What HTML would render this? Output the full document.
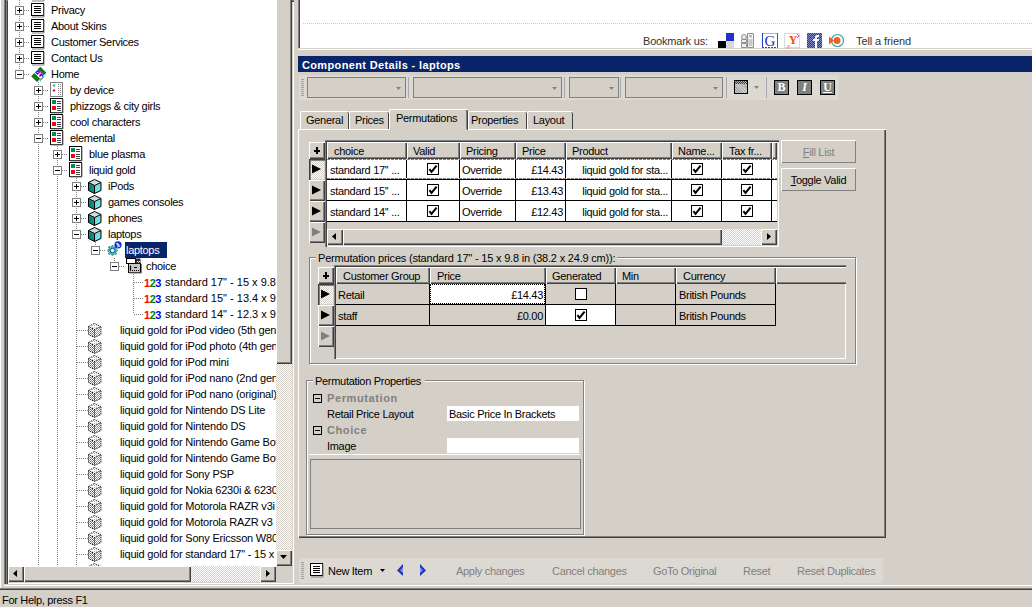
<!DOCTYPE html><html><head><meta charset="utf-8"><style>
html,body{margin:0;padding:0}
body{width:1032px;height:607px;overflow:hidden;background:#d4d0c8;position:relative;font-family:"Liberation Sans",sans-serif;font-size:11px;color:#000}
div{position:absolute;box-sizing:border-box}
.t{white-space:nowrap;line-height:16px;height:16px;letter-spacing:-0.3px}
svg{position:absolute;overflow:visible}
.dv{background:repeating-linear-gradient(to bottom,#808080 0 1px,transparent 1px 2px)}
.dh{background:repeating-linear-gradient(to right,#808080 0 1px,transparent 1px 2px)}
.chk{background:#fff;border:1px solid #000;width:12px;height:12px}
</style></head><body>
<svg width="0" height="0" style="position:absolute;left:0;top:0"><defs><pattern id="dc" width="2" height="2" patternUnits="userSpaceOnUse"><rect width="2" height="2" fill="#fff"/><rect width="1" height="1" fill="#20c8c8"/><rect x="1" y="1" width="1" height="1" fill="#20c8c8"/></pattern><pattern id="dg" width="2" height="2" patternUnits="userSpaceOnUse"><rect width="2" height="2" fill="#fff"/><rect width="1" height="1" fill="#109040"/><rect x="1" y="1" width="1" height="1" fill="#20c8c8"/></pattern><pattern id="dw" width="2" height="2" patternUnits="userSpaceOnUse"><rect width="2" height="2" fill="#fff"/><rect width="1" height="1" fill="#c0c0c0"/></pattern></defs></svg>
<div style="left:0px;top:0px;width:1px;height:589px;background:#ffffff"></div>
<div style="left:0px;top:589px;width:1032px;height:1px;background:#404040"></div>
<div style="left:0px;top:588px;width:1032px;height:1px;background:#808080"></div>
<div class="t" style="left:2px;top:592px;">For Help, press F1</div>
<div style="left:4px;top:-2px;width:290px;height:586px;background:#fff;box-shadow:inset 1px 1px 0 #808080, inset 2px 2px 0 #404040, inset 3px 3px 0 #808080, inset 4px 4px 0 #404040, inset -1px -1px 0 #ffffff, inset -2px -2px 0 #d4d0c8;"></div>
<div style="left:8px;top:0;width:268px;height:566px;overflow:hidden;background:#fff">
<div class="dv" style="left:11px;top:0px;width:1px;height:74px"></div>
<div class="dv" style="left:30px;top:82px;width:1px;height:484px"></div>
<div class="dv" style="left:49px;top:146px;width:1px;height:420px"></div>
<div class="dv" style="left:68px;top:178px;width:1px;height:388px"></div>
<div class="dv" style="left:87px;top:242px;width:1px;height:8px"></div>
<div class="dv" style="left:106px;top:258px;width:1px;height:8px"></div>
<div class="dv" style="left:125px;top:274px;width:1px;height:40px"></div>
<div class="dh" style="left:16px;top:10px;width:6px;height:1px"></div>
<div style="left:7px;top:6px;width:9px;height:9px;border:1px solid #808080;background:#fff"></div>
<div style="left:9px;top:10px;width:5px;height:1px;background:#000"></div>
<div style="left:11px;top:8px;width:1px;height:5px;background:#000"></div>
<svg style="left:23px;top:3px" width="14" height="14"><rect x="0.5" y="0.5" width="12" height="12" fill="#fff" stroke="#000"/><path d="M13 1v13H1" stroke="#808080" fill="none"/><path d="M3 3.5h7M3 5.5h7M3 7.5h7M3 9.5h7" stroke="#000" fill="none"/></svg>
<div class="t" style="left:43px;top:2px;">Privacy</div>
<div class="dh" style="left:16px;top:26px;width:6px;height:1px"></div>
<div style="left:7px;top:22px;width:9px;height:9px;border:1px solid #808080;background:#fff"></div>
<div style="left:9px;top:26px;width:5px;height:1px;background:#000"></div>
<div style="left:11px;top:24px;width:1px;height:5px;background:#000"></div>
<svg style="left:23px;top:19px" width="14" height="14"><rect x="0.5" y="0.5" width="12" height="12" fill="#fff" stroke="#000"/><path d="M13 1v13H1" stroke="#808080" fill="none"/><path d="M3 3.5h7M3 5.5h7M3 7.5h7M3 9.5h7" stroke="#000" fill="none"/></svg>
<div class="t" style="left:43px;top:18px;">About Skins</div>
<div class="dh" style="left:16px;top:42px;width:6px;height:1px"></div>
<div style="left:7px;top:38px;width:9px;height:9px;border:1px solid #808080;background:#fff"></div>
<div style="left:9px;top:42px;width:5px;height:1px;background:#000"></div>
<div style="left:11px;top:40px;width:1px;height:5px;background:#000"></div>
<svg style="left:23px;top:35px" width="14" height="14"><rect x="0.5" y="0.5" width="12" height="12" fill="#fff" stroke="#000"/><path d="M13 1v13H1" stroke="#808080" fill="none"/><path d="M3 3.5h7M3 5.5h7M3 7.5h7M3 9.5h7" stroke="#000" fill="none"/></svg>
<div class="t" style="left:43px;top:34px;">Customer Services</div>
<div class="dh" style="left:16px;top:58px;width:6px;height:1px"></div>
<div style="left:7px;top:54px;width:9px;height:9px;border:1px solid #808080;background:#fff"></div>
<div style="left:9px;top:58px;width:5px;height:1px;background:#000"></div>
<div style="left:11px;top:56px;width:1px;height:5px;background:#000"></div>
<svg style="left:23px;top:51px" width="14" height="14"><rect x="0.5" y="0.5" width="12" height="12" fill="#fff" stroke="#000"/><path d="M13 1v13H1" stroke="#808080" fill="none"/><path d="M3 3.5h7M3 5.5h7M3 7.5h7M3 9.5h7" stroke="#000" fill="none"/></svg>
<div class="t" style="left:43px;top:50px;">Contact Us</div>
<div class="dh" style="left:16px;top:74px;width:6px;height:1px"></div>
<div style="left:7px;top:70px;width:9px;height:9px;border:1px solid #808080;background:#fff"></div>
<div style="left:9px;top:74px;width:5px;height:1px;background:#000"></div>
<svg style="left:23px;top:67px" width="16" height="16"><path d="M5 4.5 L11.5 11" stroke="#fff" stroke-width="5.5"/><path d="M8 1 L14 7" stroke="#008000" stroke-width="3.8"/><path d="M1.8 7.6 L7.6 13.4" stroke="#008000" stroke-width="4.4"/><path d="M1.5 9.8l4.5 4.5M3 8.5l5 5" stroke="#707070" stroke-dasharray="1 1" stroke-width="0.8" fill="none"/><path d="M8.5 12.5 L12.5 8.5 L13.5 10 L9.5 14 Z" fill="#909090"/><path d="M5 5.5 L7 3.5 L8.5 5 L6.5 7 Z" fill="none" stroke="#0000ff" stroke-width="1.2"/><path d="M7.5 6 L9.5 4.5 L11 6 L8.5 8.5" fill="none" stroke="#ff00ff" stroke-width="1.3"/><path d="M8.5 9.5 L10.5 7.5 L12 9" fill="none" stroke="#0000ff" stroke-width="1.2"/><path d="M14 7v1.5M9.5 13.5v1" stroke="#00e0e0"/></svg>
<div class="t" style="left:43px;top:66px;">Home</div>
<div class="dh" style="left:35px;top:90px;width:6px;height:1px"></div>
<div style="left:26px;top:86px;width:9px;height:9px;border:1px solid #808080;background:#fff"></div>
<div style="left:28px;top:90px;width:5px;height:1px;background:#000"></div>
<div style="left:30px;top:88px;width:1px;height:5px;background:#000"></div>
<svg style="left:42px;top:82px" width="14" height="15"><rect x="0.5" y="0.5" width="12" height="14" fill="#fff" stroke="#000" stroke-dasharray="1 1"/><path d="M4 2l1.5 1.5L4 5 2.5 3.5z" fill="#00c0c0"/><path d="M4 7l1.5 1.5L4 10 2.5 8.5z" fill="#ff0000"/><path d="M8.5 2v11M10.5 2v11" stroke="#808080" stroke-dasharray="1 1" fill="none"/></svg>
<div class="t" style="left:62px;top:82px;">by device</div>
<div class="dh" style="left:35px;top:106px;width:6px;height:1px"></div>
<div style="left:26px;top:102px;width:9px;height:9px;border:1px solid #808080;background:#fff"></div>
<div style="left:28px;top:106px;width:5px;height:1px;background:#000"></div>
<div style="left:30px;top:104px;width:1px;height:5px;background:#000"></div>
<svg style="left:42px;top:98px" width="14" height="15"><rect x="0.5" y="0.5" width="12" height="14" fill="#fff" stroke="#000"/><path d="M13 1v14H1" stroke="#808080" fill="none"/><rect x="2" y="2" width="4" height="4" fill="#008080"/><rect x="2" y="2" width="2" height="2" fill="#00a000"/><rect x="2" y="8" width="4" height="4" fill="#ff0000"/><path d="M7 3.5h4M7 5.5h4M7 8.5h4M7 10.5h4M7 12.5h4" stroke="#404040" fill="none"/></svg>
<div class="t" style="left:62px;top:98px;">phizzogs &amp; city girls</div>
<div class="dh" style="left:35px;top:122px;width:6px;height:1px"></div>
<div style="left:26px;top:118px;width:9px;height:9px;border:1px solid #808080;background:#fff"></div>
<div style="left:28px;top:122px;width:5px;height:1px;background:#000"></div>
<div style="left:30px;top:120px;width:1px;height:5px;background:#000"></div>
<svg style="left:42px;top:114px" width="14" height="15"><rect x="0.5" y="0.5" width="12" height="14" fill="#fff" stroke="#000"/><path d="M13 1v14H1" stroke="#808080" fill="none"/><rect x="2" y="2" width="4" height="4" fill="#008080"/><rect x="2" y="2" width="2" height="2" fill="#00a000"/><rect x="2" y="8" width="4" height="4" fill="#ff0000"/><path d="M7 3.5h4M7 5.5h4M7 8.5h4M7 10.5h4M7 12.5h4" stroke="#404040" fill="none"/></svg>
<div class="t" style="left:62px;top:114px;">cool characters</div>
<div class="dh" style="left:35px;top:138px;width:6px;height:1px"></div>
<div style="left:26px;top:134px;width:9px;height:9px;border:1px solid #808080;background:#fff"></div>
<div style="left:28px;top:138px;width:5px;height:1px;background:#000"></div>
<svg style="left:42px;top:130px" width="14" height="15"><rect x="0.5" y="0.5" width="12" height="14" fill="#fff" stroke="#000"/><path d="M13 1v14H1" stroke="#808080" fill="none"/><rect x="2" y="2" width="4" height="4" fill="#008080"/><rect x="2" y="2" width="2" height="2" fill="#00a000"/><rect x="2" y="8" width="4" height="4" fill="#ff0000"/><path d="M7 3.5h4M7 5.5h4M7 8.5h4M7 10.5h4M7 12.5h4" stroke="#404040" fill="none"/></svg>
<div class="t" style="left:62px;top:130px;">elemental</div>
<div class="dh" style="left:54px;top:154px;width:6px;height:1px"></div>
<div style="left:45px;top:150px;width:9px;height:9px;border:1px solid #808080;background:#fff"></div>
<div style="left:47px;top:154px;width:5px;height:1px;background:#000"></div>
<div style="left:49px;top:152px;width:1px;height:5px;background:#000"></div>
<svg style="left:61px;top:146px" width="14" height="15"><rect x="0.5" y="0.5" width="12" height="14" fill="#fff" stroke="#000"/><path d="M13 1v14H1" stroke="#808080" fill="none"/><rect x="2" y="2" width="4" height="4" fill="#008080"/><rect x="2" y="2" width="2" height="2" fill="#00a000"/><rect x="2" y="8" width="4" height="4" fill="#ff0000"/><path d="M7 3.5h4M7 5.5h4M7 8.5h4M7 10.5h4M7 12.5h4" stroke="#404040" fill="none"/></svg>
<div class="t" style="left:81px;top:146px;">blue plasma</div>
<div class="dh" style="left:54px;top:170px;width:6px;height:1px"></div>
<div style="left:45px;top:166px;width:9px;height:9px;border:1px solid #808080;background:#fff"></div>
<div style="left:47px;top:170px;width:5px;height:1px;background:#000"></div>
<svg style="left:61px;top:162px" width="14" height="15"><rect x="0.5" y="0.5" width="12" height="14" fill="#fff" stroke="#000"/><path d="M13 1v14H1" stroke="#808080" fill="none"/><rect x="2" y="2" width="4" height="4" fill="#008080"/><rect x="2" y="2" width="2" height="2" fill="#00a000"/><rect x="2" y="8" width="4" height="4" fill="#ff0000"/><path d="M7 3.5h4M7 5.5h4M7 8.5h4M7 10.5h4M7 12.5h4" stroke="#404040" fill="none"/></svg>
<div class="t" style="left:81px;top:162px;">liquid gold</div>
<div class="dh" style="left:73px;top:186px;width:6px;height:1px"></div>
<div style="left:64px;top:182px;width:9px;height:9px;border:1px solid #808080;background:#fff"></div>
<div style="left:66px;top:186px;width:5px;height:1px;background:#000"></div>
<div style="left:68px;top:184px;width:1px;height:5px;background:#000"></div>
<svg style="left:80px;top:179px" width="15" height="16"><path d="M0.5 3.5 L6.5 0.5 L13 3.5 L6.5 6.5 Z" fill="#d8d8d8"/><path d="M0.5 3.5 L6.5 6.5 V14.5 L0.5 11.5Z" fill="#109090"/><path d="M1.5 6l2 1v5l-2-1z" fill="#108040"/><path d="M6.5 6.5 L13 3.5 V11.5 L6.5 14.5Z" fill="#70dcdc"/><path d="M6.5 0.5 L13 3.5 V11.5 L6.5 14.5 L0.5 11.5 V3.5 Z M0.5 3.5 L6.5 6.5 L13 3.5 M6.5 6.5 V14.5" fill="none" stroke="#000"/></svg>
<div class="t" style="left:100px;top:178px;">iPods</div>
<div class="dh" style="left:73px;top:202px;width:6px;height:1px"></div>
<div style="left:64px;top:198px;width:9px;height:9px;border:1px solid #808080;background:#fff"></div>
<div style="left:66px;top:202px;width:5px;height:1px;background:#000"></div>
<div style="left:68px;top:200px;width:1px;height:5px;background:#000"></div>
<svg style="left:80px;top:195px" width="15" height="16"><path d="M0.5 3.5 L6.5 0.5 L13 3.5 L6.5 6.5 Z" fill="#d8d8d8"/><path d="M0.5 3.5 L6.5 6.5 V14.5 L0.5 11.5Z" fill="#109090"/><path d="M1.5 6l2 1v5l-2-1z" fill="#108040"/><path d="M6.5 6.5 L13 3.5 V11.5 L6.5 14.5Z" fill="#70dcdc"/><path d="M6.5 0.5 L13 3.5 V11.5 L6.5 14.5 L0.5 11.5 V3.5 Z M0.5 3.5 L6.5 6.5 L13 3.5 M6.5 6.5 V14.5" fill="none" stroke="#000"/></svg>
<div class="t" style="left:100px;top:194px;">games consoles</div>
<div class="dh" style="left:73px;top:218px;width:6px;height:1px"></div>
<div style="left:64px;top:214px;width:9px;height:9px;border:1px solid #808080;background:#fff"></div>
<div style="left:66px;top:218px;width:5px;height:1px;background:#000"></div>
<div style="left:68px;top:216px;width:1px;height:5px;background:#000"></div>
<svg style="left:80px;top:211px" width="15" height="16"><path d="M0.5 3.5 L6.5 0.5 L13 3.5 L6.5 6.5 Z" fill="#d8d8d8"/><path d="M0.5 3.5 L6.5 6.5 V14.5 L0.5 11.5Z" fill="#109090"/><path d="M1.5 6l2 1v5l-2-1z" fill="#108040"/><path d="M6.5 6.5 L13 3.5 V11.5 L6.5 14.5Z" fill="#70dcdc"/><path d="M6.5 0.5 L13 3.5 V11.5 L6.5 14.5 L0.5 11.5 V3.5 Z M0.5 3.5 L6.5 6.5 L13 3.5 M6.5 6.5 V14.5" fill="none" stroke="#000"/></svg>
<div class="t" style="left:100px;top:210px;">phones</div>
<div class="dh" style="left:73px;top:234px;width:6px;height:1px"></div>
<div style="left:64px;top:230px;width:9px;height:9px;border:1px solid #808080;background:#fff"></div>
<div style="left:66px;top:234px;width:5px;height:1px;background:#000"></div>
<svg style="left:80px;top:227px" width="15" height="16"><path d="M0.5 3.5 L6.5 0.5 L13 3.5 L6.5 6.5 Z" fill="#d8d8d8"/><path d="M0.5 3.5 L6.5 6.5 V14.5 L0.5 11.5Z" fill="#109090"/><path d="M1.5 6l2 1v5l-2-1z" fill="#108040"/><path d="M6.5 6.5 L13 3.5 V11.5 L6.5 14.5Z" fill="#70dcdc"/><path d="M6.5 0.5 L13 3.5 V11.5 L6.5 14.5 L0.5 11.5 V3.5 Z M0.5 3.5 L6.5 6.5 L13 3.5 M6.5 6.5 V14.5" fill="none" stroke="#000"/></svg>
<div class="t" style="left:100px;top:226px;">laptops</div>
<div class="dh" style="left:92px;top:250px;width:6px;height:1px"></div>
<div style="left:83px;top:246px;width:9px;height:9px;border:1px solid #808080;background:#fff"></div>
<div style="left:85px;top:250px;width:5px;height:1px;background:#000"></div>
<svg style="left:97px;top:241px" width="18" height="18"><path d="M7.5 4 L9 6 L11.5 5.5 L11 8 L13 9.5 L11 11 L11.5 13.5 L9 13 L7.5 15 L6 13 L3.5 13.5 L4 11 L2 9.5 L4 8 L3.5 5.5 L6 6 Z" fill="#30c0c0" stroke="#208040" stroke-dasharray="1 1"/><circle cx="7.5" cy="9.5" r="2.2" fill="#fff" stroke="#2040a0"/><circle cx="13" cy="3.8" r="3.6" fill="#1030e0"/><path d="M11 3c1.5-1 2.5 0 2 1s1 2 2 1M13 2c-1 1.5 0 2.5 1 2s-1 2.5-2 2" stroke="#fff" stroke-width="0.9" fill="none"/></svg>
<div style="left:117px;top:242px;width:42px;height:16px;background:#0a246a"></div>
<div class="t" style="left:118px;top:242px;color:#fff">laptops</div>
<div class="dh" style="left:111px;top:266px;width:6px;height:1px"></div>
<div style="left:102px;top:262px;width:9px;height:9px;border:1px solid #808080;background:#fff"></div>
<div style="left:104px;top:266px;width:5px;height:1px;background:#000"></div>
<svg style="left:118px;top:258px" width="16" height="16"><rect x="2.5" y="5.5" width="12" height="9" fill="#c8c8c8" stroke="#000"/><rect x="0.5" y="0.5" width="9" height="5" fill="#fff" stroke="#000"/><rect x="9.5" y="0.5" width="5" height="5" fill="#303030"/><path d="M11 3l1.5 1.5L14 3" stroke="#fff" fill="none"/><path d="M4.5 8v4M4 8h1M8 9.5h3" stroke="#000" stroke-width="1.2" fill="none"/><path d="M4 12.5h9" stroke="#000" stroke-dasharray="1 1" fill="none"/><path d="M15.5 6v9H3" stroke="#808080" fill="none"/></svg>
<div class="t" style="left:138px;top:258px;">choice</div>
<div class="dh" style="left:126px;top:282px;width:10px;height:1px"></div>
<div style="left:136px;top:278px;font:bold 11px 'Liberation Sans',sans-serif;line-height:10px;letter-spacing:-0.5px;white-space:nowrap"><span style="color:#ff0000">1</span><span style="color:#008000">2</span><span style="color:#0000ff">3</span></div>
<div class="t" style="left:157px;top:274px;letter-spacing:0">standard 17" - 15 x 9.8 in (38.2 x 24.9 cm)</div>
<div class="dh" style="left:126px;top:298px;width:10px;height:1px"></div>
<div style="left:136px;top:294px;font:bold 11px 'Liberation Sans',sans-serif;line-height:10px;letter-spacing:-0.5px;white-space:nowrap"><span style="color:#ff0000">1</span><span style="color:#008000">2</span><span style="color:#0000ff">3</span></div>
<div class="t" style="left:157px;top:290px;letter-spacing:0">standard 15" - 13.4 x 9.1 in</div>
<div class="dh" style="left:126px;top:314px;width:10px;height:1px"></div>
<div style="left:136px;top:310px;font:bold 11px 'Liberation Sans',sans-serif;line-height:10px;letter-spacing:-0.5px;white-space:nowrap"><span style="color:#ff0000">1</span><span style="color:#008000">2</span><span style="color:#0000ff">3</span></div>
<div class="t" style="left:157px;top:306px;letter-spacing:0">standard 14" - 12.3 x 9 in</div>
<div class="dh" style="left:69px;top:330px;width:11px;height:1px"></div>
<svg style="left:80px;top:323px" width="15" height="16"><path d="M0.5 3.5 L6.5 0.5 L13 3.5 L6.5 6.5 Z" fill="url(#dw)"/><path d="M0.5 3.5 L6.5 6.5 V14.5 L0.5 11.5Z" fill="url(#dg)"/><path d="M6.5 6.5 L13 3.5 V11.5 L6.5 14.5Z" fill="url(#dc)"/><path d="M6.5 0.5 L13 3.5 V11.5 L6.5 14.5 L0.5 11.5 V3.5 Z M0.5 3.5 L6.5 6.5 L13 3.5 M6.5 6.5 V14.5" fill="none" stroke="#000" stroke-dasharray="1 1"/></svg>
<div class="t" style="left:112px;top:322px;letter-spacing:-0.2px">liquid gold for iPod video (5th gen)</div>
<div class="dh" style="left:69px;top:346px;width:11px;height:1px"></div>
<svg style="left:80px;top:339px" width="15" height="16"><path d="M0.5 3.5 L6.5 0.5 L13 3.5 L6.5 6.5 Z" fill="url(#dw)"/><path d="M0.5 3.5 L6.5 6.5 V14.5 L0.5 11.5Z" fill="url(#dg)"/><path d="M6.5 6.5 L13 3.5 V11.5 L6.5 14.5Z" fill="url(#dc)"/><path d="M6.5 0.5 L13 3.5 V11.5 L6.5 14.5 L0.5 11.5 V3.5 Z M0.5 3.5 L6.5 6.5 L13 3.5 M6.5 6.5 V14.5" fill="none" stroke="#000" stroke-dasharray="1 1"/></svg>
<div class="t" style="left:112px;top:338px;letter-spacing:-0.2px">liquid gold for iPod photo (4th gen)</div>
<div class="dh" style="left:69px;top:362px;width:11px;height:1px"></div>
<svg style="left:80px;top:355px" width="15" height="16"><path d="M0.5 3.5 L6.5 0.5 L13 3.5 L6.5 6.5 Z" fill="url(#dw)"/><path d="M0.5 3.5 L6.5 6.5 V14.5 L0.5 11.5Z" fill="url(#dg)"/><path d="M6.5 6.5 L13 3.5 V11.5 L6.5 14.5Z" fill="url(#dc)"/><path d="M6.5 0.5 L13 3.5 V11.5 L6.5 14.5 L0.5 11.5 V3.5 Z M0.5 3.5 L6.5 6.5 L13 3.5 M6.5 6.5 V14.5" fill="none" stroke="#000" stroke-dasharray="1 1"/></svg>
<div class="t" style="left:112px;top:354px;letter-spacing:-0.2px">liquid gold for iPod mini</div>
<div class="dh" style="left:69px;top:378px;width:11px;height:1px"></div>
<svg style="left:80px;top:371px" width="15" height="16"><path d="M0.5 3.5 L6.5 0.5 L13 3.5 L6.5 6.5 Z" fill="url(#dw)"/><path d="M0.5 3.5 L6.5 6.5 V14.5 L0.5 11.5Z" fill="url(#dg)"/><path d="M6.5 6.5 L13 3.5 V11.5 L6.5 14.5Z" fill="url(#dc)"/><path d="M6.5 0.5 L13 3.5 V11.5 L6.5 14.5 L0.5 11.5 V3.5 Z M0.5 3.5 L6.5 6.5 L13 3.5 M6.5 6.5 V14.5" fill="none" stroke="#000" stroke-dasharray="1 1"/></svg>
<div class="t" style="left:112px;top:370px;letter-spacing:-0.2px">liquid gold for iPod nano (2nd gen)</div>
<div class="dh" style="left:69px;top:394px;width:11px;height:1px"></div>
<svg style="left:80px;top:387px" width="15" height="16"><path d="M0.5 3.5 L6.5 0.5 L13 3.5 L6.5 6.5 Z" fill="url(#dw)"/><path d="M0.5 3.5 L6.5 6.5 V14.5 L0.5 11.5Z" fill="url(#dg)"/><path d="M6.5 6.5 L13 3.5 V11.5 L6.5 14.5Z" fill="url(#dc)"/><path d="M6.5 0.5 L13 3.5 V11.5 L6.5 14.5 L0.5 11.5 V3.5 Z M0.5 3.5 L6.5 6.5 L13 3.5 M6.5 6.5 V14.5" fill="none" stroke="#000" stroke-dasharray="1 1"/></svg>
<div class="t" style="left:112px;top:386px;letter-spacing:-0.2px">liquid gold for iPod nano (original)</div>
<div class="dh" style="left:69px;top:410px;width:11px;height:1px"></div>
<svg style="left:80px;top:403px" width="15" height="16"><path d="M0.5 3.5 L6.5 0.5 L13 3.5 L6.5 6.5 Z" fill="url(#dw)"/><path d="M0.5 3.5 L6.5 6.5 V14.5 L0.5 11.5Z" fill="url(#dg)"/><path d="M6.5 6.5 L13 3.5 V11.5 L6.5 14.5Z" fill="url(#dc)"/><path d="M6.5 0.5 L13 3.5 V11.5 L6.5 14.5 L0.5 11.5 V3.5 Z M0.5 3.5 L6.5 6.5 L13 3.5 M6.5 6.5 V14.5" fill="none" stroke="#000" stroke-dasharray="1 1"/></svg>
<div class="t" style="left:112px;top:402px;letter-spacing:-0.2px">liquid gold for Nintendo DS Lite</div>
<div class="dh" style="left:69px;top:426px;width:11px;height:1px"></div>
<svg style="left:80px;top:419px" width="15" height="16"><path d="M0.5 3.5 L6.5 0.5 L13 3.5 L6.5 6.5 Z" fill="url(#dw)"/><path d="M0.5 3.5 L6.5 6.5 V14.5 L0.5 11.5Z" fill="url(#dg)"/><path d="M6.5 6.5 L13 3.5 V11.5 L6.5 14.5Z" fill="url(#dc)"/><path d="M6.5 0.5 L13 3.5 V11.5 L6.5 14.5 L0.5 11.5 V3.5 Z M0.5 3.5 L6.5 6.5 L13 3.5 M6.5 6.5 V14.5" fill="none" stroke="#000" stroke-dasharray="1 1"/></svg>
<div class="t" style="left:112px;top:418px;letter-spacing:-0.2px">liquid gold for Nintendo DS</div>
<div class="dh" style="left:69px;top:442px;width:11px;height:1px"></div>
<svg style="left:80px;top:435px" width="15" height="16"><path d="M0.5 3.5 L6.5 0.5 L13 3.5 L6.5 6.5 Z" fill="url(#dw)"/><path d="M0.5 3.5 L6.5 6.5 V14.5 L0.5 11.5Z" fill="url(#dg)"/><path d="M6.5 6.5 L13 3.5 V11.5 L6.5 14.5Z" fill="url(#dc)"/><path d="M6.5 0.5 L13 3.5 V11.5 L6.5 14.5 L0.5 11.5 V3.5 Z M0.5 3.5 L6.5 6.5 L13 3.5 M6.5 6.5 V14.5" fill="none" stroke="#000" stroke-dasharray="1 1"/></svg>
<div class="t" style="left:112px;top:434px;letter-spacing:-0.2px">liquid gold for Nintendo Game Boy Micro</div>
<div class="dh" style="left:69px;top:458px;width:11px;height:1px"></div>
<svg style="left:80px;top:451px" width="15" height="16"><path d="M0.5 3.5 L6.5 0.5 L13 3.5 L6.5 6.5 Z" fill="url(#dw)"/><path d="M0.5 3.5 L6.5 6.5 V14.5 L0.5 11.5Z" fill="url(#dg)"/><path d="M6.5 6.5 L13 3.5 V11.5 L6.5 14.5Z" fill="url(#dc)"/><path d="M6.5 0.5 L13 3.5 V11.5 L6.5 14.5 L0.5 11.5 V3.5 Z M0.5 3.5 L6.5 6.5 L13 3.5 M6.5 6.5 V14.5" fill="none" stroke="#000" stroke-dasharray="1 1"/></svg>
<div class="t" style="left:112px;top:450px;letter-spacing:-0.2px">liquid gold for Nintendo Game Boy Advance</div>
<div class="dh" style="left:69px;top:474px;width:11px;height:1px"></div>
<svg style="left:80px;top:467px" width="15" height="16"><path d="M0.5 3.5 L6.5 0.5 L13 3.5 L6.5 6.5 Z" fill="url(#dw)"/><path d="M0.5 3.5 L6.5 6.5 V14.5 L0.5 11.5Z" fill="url(#dg)"/><path d="M6.5 6.5 L13 3.5 V11.5 L6.5 14.5Z" fill="url(#dc)"/><path d="M6.5 0.5 L13 3.5 V11.5 L6.5 14.5 L0.5 11.5 V3.5 Z M0.5 3.5 L6.5 6.5 L13 3.5 M6.5 6.5 V14.5" fill="none" stroke="#000" stroke-dasharray="1 1"/></svg>
<div class="t" style="left:112px;top:466px;letter-spacing:-0.2px">liquid gold for Sony PSP</div>
<div class="dh" style="left:69px;top:490px;width:11px;height:1px"></div>
<svg style="left:80px;top:483px" width="15" height="16"><path d="M0.5 3.5 L6.5 0.5 L13 3.5 L6.5 6.5 Z" fill="url(#dw)"/><path d="M0.5 3.5 L6.5 6.5 V14.5 L0.5 11.5Z" fill="url(#dg)"/><path d="M6.5 6.5 L13 3.5 V11.5 L6.5 14.5Z" fill="url(#dc)"/><path d="M6.5 0.5 L13 3.5 V11.5 L6.5 14.5 L0.5 11.5 V3.5 Z M0.5 3.5 L6.5 6.5 L13 3.5 M6.5 6.5 V14.5" fill="none" stroke="#000" stroke-dasharray="1 1"/></svg>
<div class="t" style="left:112px;top:482px;letter-spacing:-0.2px">liquid gold for Nokia 6230i &amp; 6230</div>
<div class="dh" style="left:69px;top:506px;width:11px;height:1px"></div>
<svg style="left:80px;top:499px" width="15" height="16"><path d="M0.5 3.5 L6.5 0.5 L13 3.5 L6.5 6.5 Z" fill="url(#dw)"/><path d="M0.5 3.5 L6.5 6.5 V14.5 L0.5 11.5Z" fill="url(#dg)"/><path d="M6.5 6.5 L13 3.5 V11.5 L6.5 14.5Z" fill="url(#dc)"/><path d="M6.5 0.5 L13 3.5 V11.5 L6.5 14.5 L0.5 11.5 V3.5 Z M0.5 3.5 L6.5 6.5 L13 3.5 M6.5 6.5 V14.5" fill="none" stroke="#000" stroke-dasharray="1 1"/></svg>
<div class="t" style="left:112px;top:498px;letter-spacing:-0.2px">liquid gold for Motorola RAZR v3i</div>
<div class="dh" style="left:69px;top:522px;width:11px;height:1px"></div>
<svg style="left:80px;top:515px" width="15" height="16"><path d="M0.5 3.5 L6.5 0.5 L13 3.5 L6.5 6.5 Z" fill="url(#dw)"/><path d="M0.5 3.5 L6.5 6.5 V14.5 L0.5 11.5Z" fill="url(#dg)"/><path d="M6.5 6.5 L13 3.5 V11.5 L6.5 14.5Z" fill="url(#dc)"/><path d="M6.5 0.5 L13 3.5 V11.5 L6.5 14.5 L0.5 11.5 V3.5 Z M0.5 3.5 L6.5 6.5 L13 3.5 M6.5 6.5 V14.5" fill="none" stroke="#000" stroke-dasharray="1 1"/></svg>
<div class="t" style="left:112px;top:514px;letter-spacing:-0.2px">liquid gold for Motorola RAZR v3</div>
<div class="dh" style="left:69px;top:538px;width:11px;height:1px"></div>
<svg style="left:80px;top:531px" width="15" height="16"><path d="M0.5 3.5 L6.5 0.5 L13 3.5 L6.5 6.5 Z" fill="url(#dw)"/><path d="M0.5 3.5 L6.5 6.5 V14.5 L0.5 11.5Z" fill="url(#dg)"/><path d="M6.5 6.5 L13 3.5 V11.5 L6.5 14.5Z" fill="url(#dc)"/><path d="M6.5 0.5 L13 3.5 V11.5 L6.5 14.5 L0.5 11.5 V3.5 Z M0.5 3.5 L6.5 6.5 L13 3.5 M6.5 6.5 V14.5" fill="none" stroke="#000" stroke-dasharray="1 1"/></svg>
<div class="t" style="left:112px;top:530px;letter-spacing:-0.2px">liquid gold for Sony Ericsson W800i</div>
<div class="dh" style="left:69px;top:554px;width:11px;height:1px"></div>
<svg style="left:80px;top:547px" width="15" height="16"><path d="M0.5 3.5 L6.5 0.5 L13 3.5 L6.5 6.5 Z" fill="url(#dw)"/><path d="M0.5 3.5 L6.5 6.5 V14.5 L0.5 11.5Z" fill="url(#dg)"/><path d="M6.5 6.5 L13 3.5 V11.5 L6.5 14.5Z" fill="url(#dc)"/><path d="M6.5 0.5 L13 3.5 V11.5 L6.5 14.5 L0.5 11.5 V3.5 Z M0.5 3.5 L6.5 6.5 L13 3.5 M6.5 6.5 V14.5" fill="none" stroke="#000" stroke-dasharray="1 1"/></svg>
<div class="t" style="left:112px;top:546px;letter-spacing:-0.2px">liquid gold for standard 17" - 15 x 9.8</div>
<div class="dh" style="left:69px;top:570px;width:11px;height:1px"></div>
<svg style="left:80px;top:563px" width="15" height="16"><path d="M0.5 3.5 L6.5 0.5 L13 3.5 L6.5 6.5 Z" fill="url(#dw)"/><path d="M0.5 3.5 L6.5 6.5 V14.5 L0.5 11.5Z" fill="url(#dg)"/><path d="M6.5 6.5 L13 3.5 V11.5 L6.5 14.5Z" fill="url(#dc)"/><path d="M6.5 0.5 L13 3.5 V11.5 L6.5 14.5 L0.5 11.5 V3.5 Z M0.5 3.5 L6.5 6.5 L13 3.5 M6.5 6.5 V14.5" fill="none" stroke="#000" stroke-dasharray="1 1"/></svg>
<div class="t" style="left:112px;top:562px;letter-spacing:-0.2px">liquid gold for standard 15" - 13.4 x 9.1</div>
<svg style="left:23px;top:-13px" width="14" height="14"><rect x="0.5" y="0.5" width="12" height="12" fill="#fff" stroke="#000"/><path d="M13 1v13H1" stroke="#808080" fill="none"/><path d="M3 3.5h7M3 5.5h7M3 7.5h7M3 9.5h7" stroke="#000" fill="none"/></svg>
</div>
<div style="left:276px;top:-3px;width:16px;height:367px;background:#d4d0c8;box-shadow:inset 1px 1px 0 #ffffff, inset -1px -1px 0 #404040, inset -2px -2px 0 #808080;"></div>
<div style="left:276px;top:364px;width:16px;height:186px;background:repeating-conic-gradient(#fff 0 25%,#d4d0c8 0 50%) 0 0/2px 2px"></div>
<div style="left:276px;top:550px;width:16px;height:16px;background:#d4d0c8;box-shadow:inset 1px 1px 0 #ffffff, inset -1px -1px 0 #404040, inset -2px -2px 0 #808080;"></div>
<svg style="left:280px;top:555px" width="8" height="5"><path d="M0 0h7L3.5 4z" fill="#000"/></svg>
<div style="left:8px;top:566px;width:16px;height:16px;background:#d4d0c8;box-shadow:inset 1px 1px 0 #ffffff, inset -1px -1px 0 #404040, inset -2px -2px 0 #808080;"></div>
<svg style="left:13px;top:570px" width="5" height="8"><path d="M4 0v7L0 3.5z" fill="#000"/></svg>
<div style="left:24px;top:566px;width:167px;height:16px;background:#d4d0c8;box-shadow:inset 1px 1px 0 #ffffff, inset -1px -1px 0 #404040, inset -2px -2px 0 #808080;"></div>
<div style="left:191px;top:566px;width:69px;height:16px;background:repeating-conic-gradient(#fff 0 25%,#d4d0c8 0 50%) 0 0/2px 2px"></div>
<div style="left:260px;top:566px;width:16px;height:16px;background:#d4d0c8;box-shadow:inset 1px 1px 0 #ffffff, inset -1px -1px 0 #404040, inset -2px -2px 0 #808080;"></div>
<svg style="left:266px;top:570px" width="5" height="8"><path d="M0 0v7L4 3.5z" fill="#000"/></svg>
<div style="left:276px;top:566px;width:16px;height:16px;background:#d4d0c8"></div>
<div style="left:298px;top:0px;width:734px;height:48px;background:#fff;box-shadow:inset 1px 0 0 #808080, inset 2px 0 0 #404040;"></div>
<div style="left:298px;top:49px;width:734px;height:1px;background:#ffffff"></div>
<div style="left:303px;top:23px;width:729px;height:1px;background:repeating-linear-gradient(to right,#d0ccc4 0 1px,transparent 1px 2px)"></div>
<div class="t" style="left:643px;top:33px;letter-spacing:-0.2px;color:#333">Bookmark us:</div>
<div class="t" style="left:856px;top:33px;letter-spacing:-0.1px;color:#333">Tell a friend</div>
<svg style="left:718px;top:33px" width="16" height="15"><rect x="8" y="0" width="8" height="8" fill="#2030c8"/><rect x="0" y="8" width="8" height="7" fill="#000"/><rect x="8" y="8" width="8" height="7" fill="#d8d8d8"/></svg>
<svg style="left:740px;top:33px" width="16" height="15"><circle cx="4" cy="4" r="2.5" fill="#e8e8e8" stroke="#909090"/><path d="M1.5 6.5h5v3h-5zM1.5 10.5h5v4h-5z" fill="#f0f0f0" stroke="#909090"/><path d="M7.5 0.5h6v14h-6z" fill="#f4f4f4" stroke="#909090"/><path d="M8.5 6h4v7h-4z" fill="#c8c8c8"/><circle cx="10.5" cy="3" r="1.5" fill="#b0b0b0"/></svg>
<svg style="left:762px;top:33px" width="16" height="15"><rect x="0" y="0" width="16" height="15" fill="#fff"/><path d="M0.5 0.5h15" stroke="#20a020" stroke-dasharray="1 1"/><path d="M0.5 0v15" stroke="#2040d0"/><path d="M15.5 0v15" stroke="#e02020"/><path d="M0 14.5h16" stroke="#2040d0" stroke-dasharray="2 1"/><text x="8" y="13" text-anchor="middle" font-family="Liberation Serif" font-size="15" fill="#1830c0">G</text></svg>
<svg style="left:784px;top:33px" width="16" height="15"><rect x="0.5" y="0.5" width="15" height="14" fill="#fff" stroke="#b0b0b0" stroke-dasharray="1 1"/><text x="9" y="11" text-anchor="middle" font-family="Liberation Serif" font-weight="bold" font-size="12" fill="#f05010">Y</text><path d="M13 1l2 2-2 2" stroke="#e040a0" fill="none"/><text x="3" y="14.5" font-family="Liberation Serif" font-size="6" fill="#f06020">y</text></svg>
<svg style="left:807px;top:33px" width="15" height="15"><rect x="0" y="0" width="15" height="15" fill="#2a3aa0"/><rect x="0" y="0" width="15" height="15" fill="url(#chk)" opacity="0.4"/><path d="M8 15V8H6V6h2V4.5C8 3 9 2 10.5 2H12v2h-1c-.7 0-1 .3-1 1v1h2l-.3 2H10v7" fill="#fff"/><defs><pattern id="chk" width="2" height="2" patternUnits="userSpaceOnUse"><rect width="1" height="1" fill="#fff"/><rect x="1" y="1" width="1" height="1" fill="#fff"/></pattern></defs></svg>
<svg style="left:828px;top:33px" width="16" height="15"><circle cx="9.5" cy="7.5" r="6" fill="none" stroke="#30a8b0" stroke-width="1.2"/><circle cx="9" cy="7.5" r="3.5" fill="#f06020"/><path d="M1 3.5l5 4-5 4z" fill="#f06020"/></svg>
<div style="left:298px;top:56px;width:734px;height:16px;background:#0a246a"></div>
<div class="t" style="left:302px;top:57px;color:#fff;font-weight:bold;letter-spacing:0.35px">Component Details - laptops</div>
<div style="left:299px;top:75px;width:540px;height:25px;background:#dcd9d2;border-radius:2px"></div>
<div style="left:301px;top:79px;width:3px;height:1px;background:#a0a0a0"></div>
<div style="left:301px;top:81px;width:3px;height:1px;background:#a0a0a0"></div>
<div style="left:301px;top:83px;width:3px;height:1px;background:#a0a0a0"></div>
<div style="left:301px;top:85px;width:3px;height:1px;background:#a0a0a0"></div>
<div style="left:301px;top:87px;width:3px;height:1px;background:#a0a0a0"></div>
<div style="left:301px;top:89px;width:3px;height:1px;background:#a0a0a0"></div>
<div style="left:301px;top:91px;width:3px;height:1px;background:#a0a0a0"></div>
<div style="left:301px;top:93px;width:3px;height:1px;background:#a0a0a0"></div>
<div style="left:301px;top:95px;width:3px;height:1px;background:#a0a0a0"></div>
<div style="left:307px;top:77px;width:99px;height:21px;border:1px solid #808080;background:#d4d0c8"></div>
<svg style="left:396px;top:87px" width="6" height="4"><path d="M0 0h5L2.5 3z" fill="#808080"/></svg>
<div style="left:408px;top:77px;width:2px;height:21px;background:#a4a8b0;width:1px"></div>
<div style="left:413px;top:77px;width:149px;height:21px;border:1px solid #808080;background:#d4d0c8"></div>
<svg style="left:552px;top:87px" width="6" height="4"><path d="M0 0h5L2.5 3z" fill="#808080"/></svg>
<div style="left:564px;top:77px;width:2px;height:21px;background:#a4a8b0;width:1px"></div>
<div style="left:569px;top:77px;width:50px;height:21px;border:1px solid #808080;background:#d4d0c8"></div>
<svg style="left:609px;top:87px" width="6" height="4"><path d="M0 0h5L2.5 3z" fill="#808080"/></svg>
<div style="left:620px;top:77px;width:2px;height:21px;background:#a4a8b0;width:1px"></div>
<div style="left:625px;top:77px;width:98px;height:21px;border:1px solid #808080;background:#d4d0c8"></div>
<svg style="left:713px;top:87px" width="6" height="4"><path d="M0 0h5L2.5 3z" fill="#808080"/></svg>
<div style="left:726px;top:77px;width:1px;height:21px;background:#a4a8b0"></div>
<div style="left:734px;top:80px;width:14px;height:14px;border:1px solid #000;background:repeating-linear-gradient(45deg,#a8a8a8 0 1px,#d0d0d0 1px 2px)"></div>
<div style="left:735px;top:81px;width:12px;height:3px;background:repeating-conic-gradient(#404040 0 25%,#b0b0b0 0 50%) 0 0/2px 2px"></div>
<svg style="left:754px;top:86px" width="6" height="4"><path d="M0 0h5L2.5 3z" fill="#808080"/></svg>
<div style="left:766px;top:77px;width:2px;height:21px;background:#a4a8b0;width:1px"></div>
<div style="left:774px;top:80px;width:15px;height:15px;background:#808080;border:1px solid #000"></div>
<div style="left:774px;top:80px;width:15px;height:15px;color:#fff;font:bold 12px 'Liberation Serif',serif;line-height:15px;text-align:center;font-weight:bold">B</div>
<div style="left:797px;top:80px;width:15px;height:15px;background:#808080;border:1px solid #000"></div>
<div style="left:797px;top:80px;width:15px;height:15px;color:#fff;font:bold 12px 'Liberation Serif',serif;line-height:15px;text-align:center;font-style:italic;font-weight:bold">I</div>
<div style="left:820px;top:80px;width:15px;height:15px;background:#808080;border:1px solid #000"></div>
<div style="left:820px;top:80px;width:15px;height:15px;color:#fff;font:bold 12px 'Liberation Serif',serif;line-height:15px;text-align:center;text-decoration:underline;font-weight:bold">U</div>
<div style="left:298px;top:129px;width:588px;height:409px;background:#d4d0c8;border-left:1px solid #ffffff;border-top:1px solid #ffffff;box-shadow:inset -1px -1px 0 #404040, inset -2px -2px 0 #808080"></div>
<div style="left:300px;top:111px;width:49px;height:18px;background:#d4d0c8;border-left:1px solid #ffffff;border-top:1px solid #ffffff;box-shadow:inset -1px 0 0 #404040;border-radius:2px 2px 0 0"></div>
<div class="t" style="left:306px;top:112px;">General</div>
<div style="left:349px;top:111px;width:40px;height:18px;background:#d4d0c8;border-left:1px solid #ffffff;border-top:1px solid #ffffff;box-shadow:inset -1px 0 0 #404040;border-radius:2px 2px 0 0"></div>
<div class="t" style="left:355px;top:112px;">Prices</div>
<div style="left:468px;top:111px;width:59px;height:18px;background:#d4d0c8;border-left:1px solid #ffffff;border-top:1px solid #ffffff;box-shadow:inset -1px 0 0 #404040;border-radius:2px 2px 0 0"></div>
<div class="t" style="left:471px;top:112px;">Properties</div>
<div style="left:527px;top:111px;width:46px;height:18px;background:#d4d0c8;border-left:1px solid #ffffff;border-top:1px solid #ffffff;box-shadow:inset -1px 0 0 #404040;border-radius:2px 2px 0 0"></div>
<div class="t" style="left:533px;top:112px;">Layout</div>
<div style="left:389px;top:109px;width:79px;height:21px;background:#d4d0c8;border-left:1px solid #ffffff;border-top:1px solid #ffffff;box-shadow:inset -1px 0 0 #404040, inset -2px 0 0 #808080;border-radius:2px 2px 0 0"></div>
<div class="t" style="left:396px;top:110px;">Permutations</div>
<div style="left:390px;top:129px;width:77px;height:1px;background:#d4d0c8"></div>
<div style="left:325px;top:140px;width:454px;height:107px;background:#d4d0c8;box-shadow:inset 1px 1px 0 #808080, inset 2px 2px 0 #404040, inset -1px -1px 0 #ffffff, inset -2px -2px 0 #d4d0c8;"></div>
<div style="left:309px;top:142px;width:16px;height:17px;background:#d4d0c8;box-shadow:inset 1px 1px 0 #ffffff, inset -1px -1px 0 #404040, inset -2px -2px 0 #808080;"></div>
<div style="left:316px;top:147px;width:2px;height:7px;background:#000"></div>
<div style="left:314px;top:150px;width:6px;height:2px;background:#000"></div>
<div style="left:309px;top:159px;width:16px;height:21px;background:repeating-conic-gradient(#fff 0 25%,#d4d0c8 0 50%) 0 0/2px 2px;box-shadow:inset 1px 1px 0 #404040, inset 2px 2px 0 #808080, inset -1px -1px 0 #d4d0c8"></div>
<svg style="left:312px;top:164px" width="10" height="10"><path d="M0 0.5L9 5L0 9.5z" fill="#000"/></svg>
<div style="left:309px;top:180px;width:16px;height:21px;background:#d4d0c8;box-shadow:inset 1px 1px 0 #ffffff, inset -1px -1px 0 #404040, inset -2px -2px 0 #808080;"></div>
<svg style="left:312px;top:185px" width="10" height="10"><path d="M0 0.5L9 5L0 9.5z" fill="#000"/></svg>
<div style="left:309px;top:201px;width:16px;height:21px;background:#d4d0c8;box-shadow:inset 1px 1px 0 #ffffff, inset -1px -1px 0 #404040, inset -2px -2px 0 #808080;"></div>
<svg style="left:312px;top:206px" width="10" height="10"><path d="M0 0.5L9 5L0 9.5z" fill="#000"/></svg>
<div style="left:309px;top:222px;width:16px;height:21px;background:#d4d0c8;box-shadow:inset 1px 1px 0 #ffffff, inset -1px -1px 0 #404040, inset -2px -2px 0 #808080;"></div>
<svg style="left:312px;top:227px" width="10" height="10"><path d="M0 0.5L9 5L0 9.5z" fill="#808080"/></svg>
<div style="left:327px;top:142px;width:80px;height:17px;background:#d4d0c8;box-shadow:inset 1px 1px 0 #ffffff, inset -1px -1px 0 #404040, inset -2px -2px 0 #808080;"></div>
<div class="t" style="left:334px;top:143px;">choice</div>
<div style="left:407px;top:142px;width:53px;height:17px;background:#d4d0c8;box-shadow:inset 1px 1px 0 #ffffff, inset -1px -1px 0 #404040, inset -2px -2px 0 #808080;"></div>
<div class="t" style="left:413px;top:143px;">Valid</div>
<div style="left:460px;top:142px;width:56px;height:17px;background:#d4d0c8;box-shadow:inset 1px 1px 0 #ffffff, inset -1px -1px 0 #404040, inset -2px -2px 0 #808080;"></div>
<div class="t" style="left:466px;top:143px;">Pricing</div>
<div style="left:516px;top:142px;width:50px;height:17px;background:#d4d0c8;box-shadow:inset 1px 1px 0 #ffffff, inset -1px -1px 0 #404040, inset -2px -2px 0 #808080;"></div>
<div class="t" style="left:522px;top:143px;">Price</div>
<div style="left:566px;top:142px;width:106px;height:17px;background:#d4d0c8;box-shadow:inset 1px 1px 0 #ffffff, inset -1px -1px 0 #404040, inset -2px -2px 0 #808080;"></div>
<div class="t" style="left:572px;top:143px;">Product</div>
<div style="left:672px;top:142px;width:50px;height:17px;background:#d4d0c8;box-shadow:inset 1px 1px 0 #ffffff, inset -1px -1px 0 #404040, inset -2px -2px 0 #808080;"></div>
<div class="t" style="left:678px;top:143px;">Name...</div>
<div style="left:722px;top:142px;width:50px;height:17px;background:#d4d0c8;box-shadow:inset 1px 1px 0 #ffffff, inset -1px -1px 0 #404040, inset -2px -2px 0 #808080;"></div>
<div class="t" style="left:729px;top:143px;">Tax fr...</div>
<div style="left:772px;top:142px;width:5px;height:17px;background:#d4d0c8;box-shadow:inset 1px 1px 0 #ffffff, inset -1px -1px 0 #404040, inset -2px -2px 0 #808080;"></div>
<div style="left:327px;top:159px;width:450px;height:63px;background:#fff"></div>
<div style="left:327px;top:179px;width:450px;height:1px;background:#000"></div>
<div style="left:327px;top:200px;width:450px;height:1px;background:#000"></div>
<div style="left:327px;top:221px;width:450px;height:1px;background:#000"></div>
<div style="left:406px;top:159px;width:1px;height:63px;background:#000"></div>
<div style="left:459px;top:159px;width:1px;height:63px;background:#000"></div>
<div style="left:515px;top:159px;width:1px;height:63px;background:#000"></div>
<div style="left:565px;top:159px;width:1px;height:63px;background:#000"></div>
<div style="left:671px;top:159px;width:1px;height:63px;background:#000"></div>
<div style="left:721px;top:159px;width:1px;height:63px;background:#000"></div>
<div style="left:771px;top:159px;width:1px;height:63px;background:#000"></div>
<div style="left:327px;top:159px;width:450px;height:1px;background:repeating-linear-gradient(to right,#808080 0 3px,#fff 3px 4px)"></div>
<div style="left:327px;top:178px;width:450px;height:1px;background:repeating-linear-gradient(to right,#808080 0 3px,#fff 3px 4px)"></div>
<div class="t" style="left:330px;top:162px;">standard 17'' ...</div>
<div class="chk" style="left:427px;top:163px"></div>
<svg style="left:427px;top:163px" width="12" height="12"><path d="M2.4 6.2L4.5 8.8L9.6 2.6" stroke="#000" stroke-width="2" fill="none"/></svg>
<div class="t" style="left:462px;top:162px;">Override</div>
<div class="t" style="left:516px;top:162px;width:47px;text-align:right">£14.43</div>
<div class="t" style="left:566px;top:162px;width:102px;text-align:right">liquid gold for sta...</div>
<div class="chk" style="left:691px;top:163px"></div>
<svg style="left:691px;top:163px" width="12" height="12"><path d="M2.4 6.2L4.5 8.8L9.6 2.6" stroke="#000" stroke-width="2" fill="none"/></svg>
<div class="chk" style="left:741px;top:163px"></div>
<svg style="left:741px;top:163px" width="12" height="12"><path d="M2.4 6.2L4.5 8.8L9.6 2.6" stroke="#000" stroke-width="2" fill="none"/></svg>
<div class="t" style="left:330px;top:183px;">standard 15'' ...</div>
<div class="chk" style="left:427px;top:184px"></div>
<svg style="left:427px;top:184px" width="12" height="12"><path d="M2.4 6.2L4.5 8.8L9.6 2.6" stroke="#000" stroke-width="2" fill="none"/></svg>
<div class="t" style="left:462px;top:183px;">Override</div>
<div class="t" style="left:516px;top:183px;width:47px;text-align:right">£13.43</div>
<div class="t" style="left:566px;top:183px;width:102px;text-align:right">liquid gold for sta...</div>
<div class="chk" style="left:691px;top:184px"></div>
<svg style="left:691px;top:184px" width="12" height="12"><path d="M2.4 6.2L4.5 8.8L9.6 2.6" stroke="#000" stroke-width="2" fill="none"/></svg>
<div class="chk" style="left:741px;top:184px"></div>
<svg style="left:741px;top:184px" width="12" height="12"><path d="M2.4 6.2L4.5 8.8L9.6 2.6" stroke="#000" stroke-width="2" fill="none"/></svg>
<div class="t" style="left:330px;top:204px;">standard 14'' ...</div>
<div class="chk" style="left:427px;top:205px"></div>
<svg style="left:427px;top:205px" width="12" height="12"><path d="M2.4 6.2L4.5 8.8L9.6 2.6" stroke="#000" stroke-width="2" fill="none"/></svg>
<div class="t" style="left:462px;top:204px;">Override</div>
<div class="t" style="left:516px;top:204px;width:47px;text-align:right">£12.43</div>
<div class="t" style="left:566px;top:204px;width:102px;text-align:right">liquid gold for sta...</div>
<div class="chk" style="left:691px;top:205px"></div>
<svg style="left:691px;top:205px" width="12" height="12"><path d="M2.4 6.2L4.5 8.8L9.6 2.6" stroke="#000" stroke-width="2" fill="none"/></svg>
<div class="chk" style="left:741px;top:205px"></div>
<svg style="left:741px;top:205px" width="12" height="12"><path d="M2.4 6.2L4.5 8.8L9.6 2.6" stroke="#000" stroke-width="2" fill="none"/></svg>
<div style="left:327px;top:229px;width:16px;height:16px;background:#d4d0c8;box-shadow:inset 1px 1px 0 #ffffff, inset -1px -1px 0 #404040, inset -2px -2px 0 #808080;"></div>
<svg style="left:332px;top:233px" width="5" height="8"><path d="M4 0v7L0 3.5z" fill="#000"/></svg>
<div style="left:343px;top:229px;width:379px;height:16px;background:#d4d0c8;box-shadow:inset 1px 1px 0 #ffffff, inset -1px -1px 0 #404040, inset -2px -2px 0 #808080;"></div>
<div style="left:722px;top:229px;width:39px;height:16px;background:repeating-conic-gradient(#fff 0 25%,#d4d0c8 0 50%) 0 0/2px 2px"></div>
<div style="left:761px;top:229px;width:16px;height:16px;background:#d4d0c8;box-shadow:inset 1px 1px 0 #ffffff, inset -1px -1px 0 #404040, inset -2px -2px 0 #808080;"></div>
<svg style="left:767px;top:233px" width="5" height="8"><path d="M0 0v7L4 3.5z" fill="#000"/></svg>
<div style="left:781px;top:140px;width:75px;height:23px;background:#d4d0c8;box-shadow:inset 1px 1px 0 #ffffff, inset -1px -1px 0 #808080"></div>
<div class="t" style="left:781px;top:144px;width:75px;text-align:center;color:#808080"><u>F</u>ill List</div>
<div style="left:781px;top:168px;width:75px;height:23px;background:#d4d0c8;box-shadow:inset 1px 1px 0 #ffffff, inset -1px -1px 0 #808080"></div>
<div class="t" style="left:781px;top:172px;width:75px;text-align:center"><u>T</u>oggle Valid</div>
<div style="left:309px;top:257px;width:547px;height:107px;border:1px solid #808080;box-shadow:inset 1px 1px 0 #ffffff, 1px 1px 0 #ffffff"></div>
<div style="left:316px;top:251px;width:301px;height:12px;background:#d4d0c8"></div>
<div class="t" style="left:318px;top:250px;letter-spacing:-0.2px">Permutation prices (standard 17'' - 15 x 9.8 in (38.2 x 24.9 cm)):</div>
<div style="left:334px;top:265px;width:512px;height:94px;background:#d4d0c8;box-shadow:inset 1px 1px 0 #808080, inset 2px 2px 0 #404040, inset -1px -1px 0 #ffffff, inset -2px -2px 0 #d4d0c8;"></div>
<div style="left:318px;top:267px;width:16px;height:17px;background:#d4d0c8;box-shadow:inset 1px 1px 0 #ffffff, inset -1px -1px 0 #404040, inset -2px -2px 0 #808080;"></div>
<div style="left:325px;top:272px;width:2px;height:7px;background:#000"></div>
<div style="left:323px;top:275px;width:6px;height:2px;background:#000"></div>
<div style="left:318px;top:284px;width:16px;height:21px;background:repeating-conic-gradient(#fff 0 25%,#d4d0c8 0 50%) 0 0/2px 2px;box-shadow:inset 1px 1px 0 #404040, inset 2px 2px 0 #808080, inset -1px -1px 0 #d4d0c8"></div>
<svg style="left:321px;top:289px" width="10" height="10"><path d="M0 0.5L9 5L0 9.5z" fill="#000"/></svg>
<div style="left:318px;top:305px;width:16px;height:21px;background:#d4d0c8;box-shadow:inset 1px 1px 0 #ffffff, inset -1px -1px 0 #404040, inset -2px -2px 0 #808080;"></div>
<svg style="left:321px;top:310px" width="10" height="10"><path d="M0 0.5L9 5L0 9.5z" fill="#000"/></svg>
<div style="left:318px;top:326px;width:16px;height:21px;background:#d4d0c8;box-shadow:inset 1px 1px 0 #ffffff, inset -1px -1px 0 #404040, inset -2px -2px 0 #808080;"></div>
<svg style="left:321px;top:331px" width="10" height="10"><path d="M0 0.5L9 5L0 9.5z" fill="#808080"/></svg>
<div style="left:336px;top:267px;width:94px;height:17px;background:#d4d0c8;box-shadow:inset 1px 1px 0 #ffffff, inset -1px -1px 0 #404040, inset -2px -2px 0 #808080;"></div>
<div class="t" style="left:343px;top:268px;">Customer Group</div>
<div style="left:430px;top:267px;width:116px;height:17px;background:#d4d0c8;box-shadow:inset 1px 1px 0 #ffffff, inset -1px -1px 0 #404040, inset -2px -2px 0 #808080;"></div>
<div class="t" style="left:437px;top:268px;">Price</div>
<div style="left:546px;top:267px;width:70px;height:17px;background:#d4d0c8;box-shadow:inset 1px 1px 0 #ffffff, inset -1px -1px 0 #404040, inset -2px -2px 0 #808080;"></div>
<div class="t" style="left:552px;top:268px;">Generated</div>
<div style="left:616px;top:267px;width:60px;height:17px;background:#d4d0c8;box-shadow:inset 1px 1px 0 #ffffff, inset -1px -1px 0 #404040, inset -2px -2px 0 #808080;"></div>
<div class="t" style="left:622px;top:268px;">Min</div>
<div style="left:676px;top:267px;width:100px;height:17px;background:#d4d0c8;box-shadow:inset 1px 1px 0 #ffffff, inset -1px -1px 0 #404040, inset -2px -2px 0 #808080;"></div>
<div class="t" style="left:683px;top:268px;">Currency</div>
<div style="left:776px;top:267px;width:70px;height:17px;background:#d4d0c8;box-shadow:inset 1px 1px 0 #ffffff, inset 0 -1px 0 #404040, inset 0 -2px 0 #808080"></div>
<div style="left:336px;top:304px;width:440px;height:1px;background:#000"></div>
<div style="left:336px;top:325px;width:440px;height:1px;background:#000"></div>
<div style="left:429px;top:284px;width:1px;height:42px;background:#000"></div>
<div style="left:545px;top:284px;width:1px;height:42px;background:#000"></div>
<div style="left:615px;top:284px;width:1px;height:42px;background:#000"></div>
<div style="left:675px;top:284px;width:1px;height:42px;background:#000"></div>
<div style="left:775px;top:284px;width:1px;height:42px;background:#000"></div>
<div style="left:430px;top:284px;width:115px;height:20px;background:#fff;border:1px dotted #000"></div>
<div style="left:546px;top:305px;width:69px;height:20px;background:#fff"></div>
<div class="t" style="left:338px;top:287px;">Retail</div>
<div class="t" style="left:338px;top:308px;">staff</div>
<div class="t" style="left:430px;top:287px;width:113px;text-align:right">£14.43</div>
<div class="t" style="left:430px;top:308px;width:113px;text-align:right">£0.00</div>
<div class="chk" style="left:575px;top:288px"></div>
<div class="chk" style="left:575px;top:309px"></div>
<svg style="left:575px;top:309px" width="12" height="12"><path d="M2.4 6.2L4.5 8.8L9.6 2.6" stroke="#000" stroke-width="2" fill="none"/></svg>
<div class="t" style="left:679px;top:287px;">British Pounds</div>
<div class="t" style="left:679px;top:308px;">British Pounds</div>
<div style="left:306px;top:380px;width:278px;height:155px;border:1px solid #808080;box-shadow:inset 1px 1px 0 #ffffff, 1px 1px 0 #ffffff"></div>
<div style="left:313px;top:374px;width:112px;height:12px;background:#d4d0c8"></div>
<div class="t" style="left:315px;top:373px;">Permutation Properties</div>
<div style="left:313px;top:394px;width:9px;height:9px;border:1px solid #000"></div>
<div style="left:315px;top:398px;width:5px;height:1px;background:#000"></div>
<div class="t" style="left:327px;top:390px;font-weight:bold;color:#808080;letter-spacing:0.6px">Permutation</div>
<div style="left:313px;top:426px;width:9px;height:9px;border:1px solid #000"></div>
<div style="left:315px;top:430px;width:5px;height:1px;background:#000"></div>
<div class="t" style="left:327px;top:422px;font-weight:bold;color:#808080;letter-spacing:0.6px">Choice</div>
<div class="t" style="left:327px;top:406px;">Retail Price Layout</div>
<div class="t" style="left:327px;top:438px;">Image</div>
<div style="left:447px;top:406px;width:132px;height:15px;background:#fff"></div>
<div class="t" style="left:449px;top:406px;">Basic Price In Brackets</div>
<div style="left:447px;top:438px;width:132px;height:15px;background:#fff"></div>
<div style="left:309px;top:454px;width:271px;height:1px;background:#fff"></div>
<div style="left:310px;top:459px;width:271px;height:70px;border:1px solid #808080"></div>
<div style="left:299px;top:558px;width:584px;height:25px;background:#dcd9d2;border-radius:2px"></div>
<div style="left:301px;top:562px;width:3px;height:1px;background:#a0a0a0"></div>
<div style="left:301px;top:564px;width:3px;height:1px;background:#a0a0a0"></div>
<div style="left:301px;top:566px;width:3px;height:1px;background:#a0a0a0"></div>
<div style="left:301px;top:568px;width:3px;height:1px;background:#a0a0a0"></div>
<div style="left:301px;top:570px;width:3px;height:1px;background:#a0a0a0"></div>
<div style="left:301px;top:572px;width:3px;height:1px;background:#a0a0a0"></div>
<div style="left:301px;top:574px;width:3px;height:1px;background:#a0a0a0"></div>
<div style="left:301px;top:576px;width:3px;height:1px;background:#a0a0a0"></div>
<div style="left:301px;top:578px;width:3px;height:1px;background:#a0a0a0"></div>
<svg style="left:310px;top:563px" width="14" height="14"><rect x="0.5" y="0.5" width="12" height="12" fill="#fff" stroke="#000"/><path d="M13 1v13H1" stroke="#808080" fill="none"/><path d="M3 3.5h7M3 5.5h7M3 7.5h7M3 9.5h7" stroke="#000" fill="none"/></svg>
<div class="t" style="left:328px;top:563px;">New Item</div>
<svg style="left:380px;top:569px" width="6" height="4"><path d="M0 0h5L2.5 3z" fill="#000"/></svg>
<svg style="left:397px;top:564px" width="7" height="13"><path d="M6 0L0 6.5L6 12z" fill="#2030c0"/><path d="M6 3L3 6.5L6 9z" fill="#8090f0"/></svg>
<svg style="left:420px;top:564px" width="7" height="13"><path d="M0 0L6 6.5L0 12z" fill="#2030c0"/><path d="M0 3L3 6.5L0 9z" fill="#8090f0"/></svg>
<div class="t" style="left:456px;top:563px;color:#808080">Apply changes</div>
<div class="t" style="left:552px;top:563px;color:#808080">Cancel changes</div>
<div class="t" style="left:653px;top:563px;color:#808080">GoTo Original</div>
<div class="t" style="left:743px;top:563px;color:#808080">Reset</div>
<div class="t" style="left:797px;top:563px;color:#808080">Reset Duplicates</div>
<div style="left:4px;top:585px;width:1028px;height:1px;background:#fff"></div>
<div style="left:298px;top:588px;width:734px;height:1px;background:#808080"></div>
</body></html>
